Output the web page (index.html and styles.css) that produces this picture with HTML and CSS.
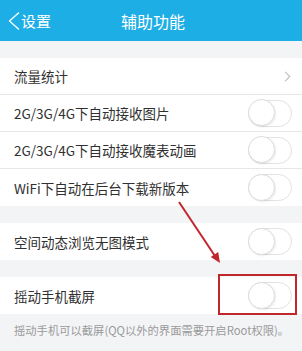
FILE: index.html
```html
<!DOCTYPE html>
<html>
<head>
	<meta charset="UTF-8">
	<title>辅助功能</title>
	<link rel="stylesheet" href="styles.css">
</head>
<body>

<div class="page">
	<div class="topbar">
		<div class="back">
			<svg class="chev" width="12" height="18" viewBox="0 0 12 18"><polyline points="11,0.5 1.5,9 11,17.5" fill="none" stroke="#fff" stroke-width="1.3"/></svg>
			设置
		</div>
		<div class="title">辅助功能</div>
	</div>

	<div class="group">
		<div class="row"><span>流量统计</span><span class="arrow"></span></div>
		<div class="row"><span>2G/3G/4G下自动接收图片</span><span class="switch"></span></div>
		<div class="row"><span>2G/3G/4G下自动接收魔表动画</span><span class="switch"></span></div>
		<div class="row"><span>WiFi下自动在后台下载新版本</span><span class="switch"></span></div>
	</div>

	<div class="group">
		<div class="row"><span>空间动态浏览无图模式</span><span class="switch"></span></div>
	</div>

	<div class="group">
		<div class="row"><span>摇动手机截屏</span><span class="switch"></span></div>
	</div>

	<p class="note">摇动手机可以截屏(QQ以外的界面需要开启Root权限)。</p>

	<!-- annotation drawn over the screenshot -->
	<svg class="mark" width="302" height="351" viewBox="0 0 302 351">
		<line x1="179" y1="202" x2="215" y2="256" stroke="#c0272d" stroke-width="2"/>
		<polygon points="220,263 210.8,256.9 218.2,252" fill="#c0272d"/>
	</svg>
	<div class="box"></div>
</div>

</body>
</html>
```

FILE: styles.css
```css
body{
	margin: 0;
	font-family: "Noto Sans CJK SC", "Noto Sans", sans-serif;
	background-color: #f3f4f6;
	color: #303030;
}
.page{
	position: relative;
	width: 302px;
	height: 351px;
	overflow: hidden;
}

.topbar{
	position: relative;
	height: 41px;
	background-color: #1eaee6;
	color: #fff;
	display: flex;
	align-items: center;
	justify-content: center;
}
.back{
	position: absolute;
	left: 8px;
	top: 0;
	height: 41px;
	display: flex;
	align-items: center;
	font-size: 15px;
}
.chev{
	margin-right: 1px;
}
.title{
	font-size: 16px;
	margin-left: 4px;
}

.group{
	margin-top: 17px;
	background-color: #fff;
}
.row{
	height: 37px;
	box-sizing: border-box;
	padding: 0 10px 0 14px;
	display: flex;
	align-items: center;
	justify-content: space-between;
	font-size: 13.5px;
	border-bottom: 1px solid #e6e6e8;
}
.group .row:last-child{
	border-bottom: none;
}
.group:last-of-type .row{
	height: 36px;
}

.arrow{
	width: 6px;
	height: 6px;
	border-top: 1px solid #b8b8bc;
	border-right: 1px solid #b8b8bc;
	transform: rotate(45deg);
	margin-right: 3px;
}

.switch{
	position: relative;
	width: 44px;
	height: 27px;
	box-sizing: border-box;
	border: 1.5px solid #e2e2e2;
	border-radius: 14px;
	background-color: #fff;
}
.switch::before{
	content: "";
	position: absolute;
	left: -1.5px;
	top: -1.5px;
	width: 27px;
	height: 27px;
	box-sizing: border-box;
	border: 1.5px solid #dcdcdc;
	border-radius: 50%;
	background-color: #fff;
	box-shadow: 1px 1px 2px rgba(0,0,0,0.08);
}

.note{
	margin: 8px 0 0 14px;
	font-size: 11.3px;
	white-space: nowrap;
	color: #9a9a9a;
}

.mark{
	position: absolute;
	left: 0;
	top: 0;
}
.box{
	position: absolute;
	left: 218px;
	top: 274px;
	width: 79px;
	height: 41px;
	box-sizing: border-box;
	border: 2px solid #c0272d;
}
```
